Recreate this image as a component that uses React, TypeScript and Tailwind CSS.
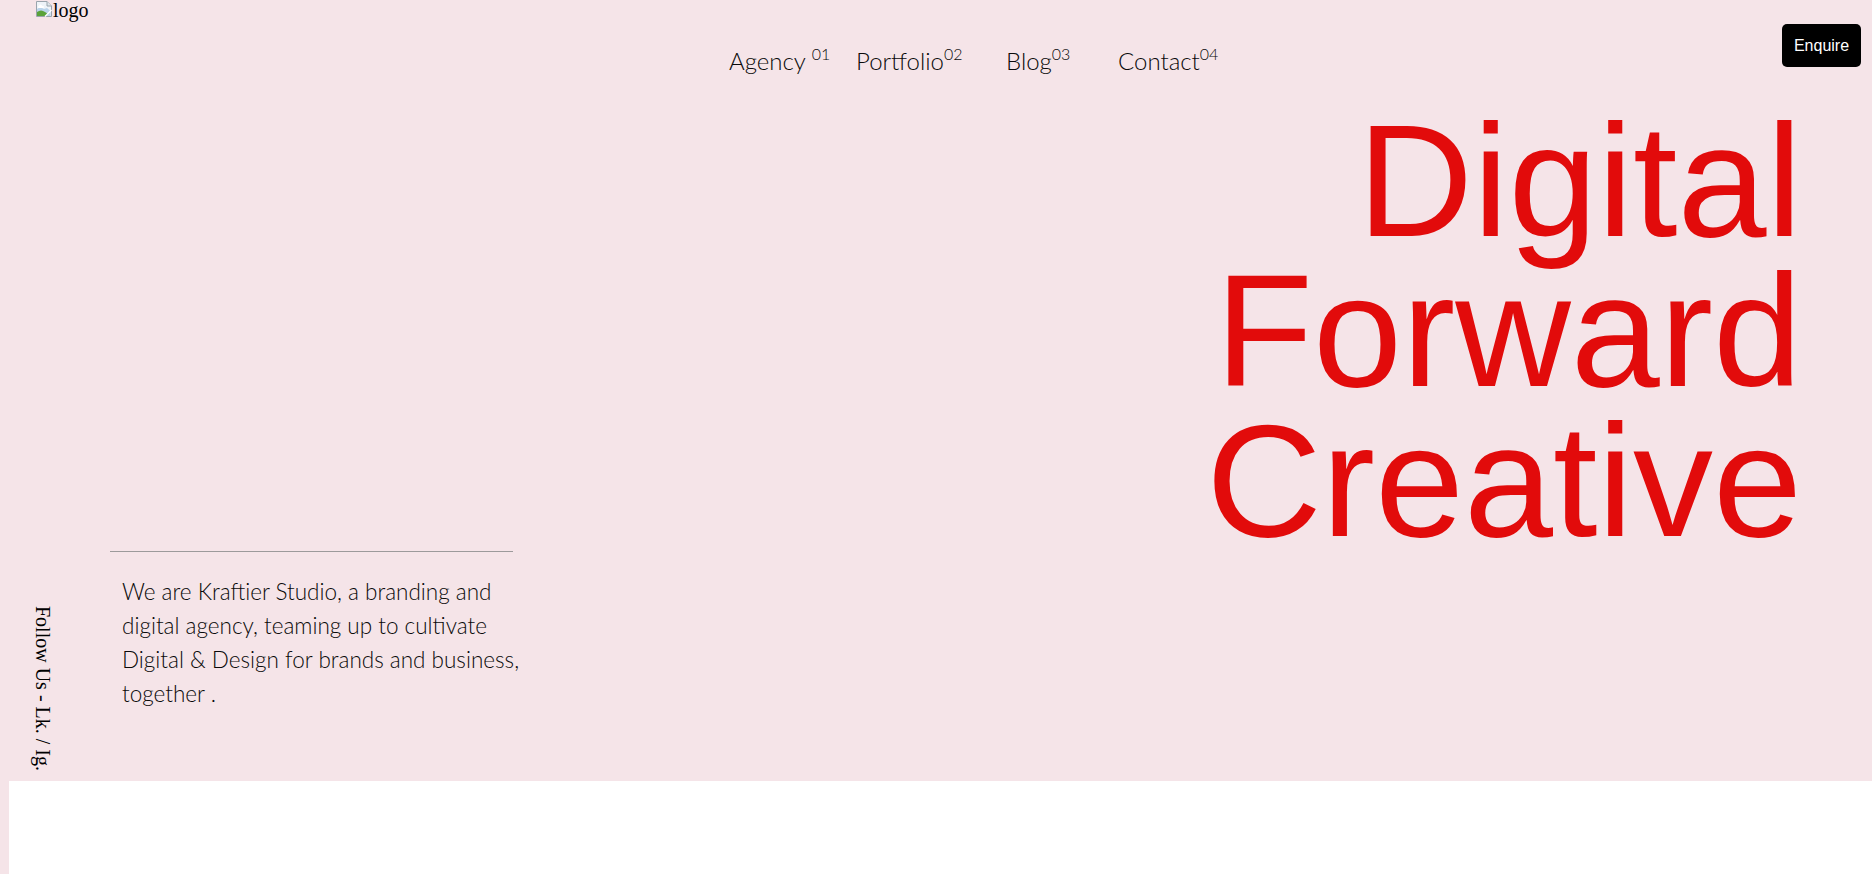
import React from "react";

function BrokenImg() {
  return (
    <svg width="18" height="18" viewBox="0 0 18 18" className="shrink-0">
      <path d="M1.5 1.5 H12 L16.5 6 V16.5 H1.5 Z" fill="#eef3f8" stroke="#9aa4ad" strokeWidth="1" />
      <path d="M12 1.5 V6 H16.5" fill="#dfe5ea" stroke="#9aa4ad" strokeWidth="1" />
      <path d="M2 9 Q5 6 9 9 L12 8 L15.5 11 V16 H2 Z" fill="#b9d3ea" />
      <path d="M2 16 V12 Q6 9 10 12 L13 14 L11 16 Z" fill="#5aa23a" />
      <path d="M4 6 a1.5 1.5 0 0 1 3 0 h1 a1 1 0 0 1 0 2 h-4 a1 1 0 0 1 0 -2" fill="#ffffff" />
      <path d="M10 16.5 L16.5 10" stroke="#ffffff" strokeWidth="1.5" />
    </svg>
  );
}

export default function App() {
  const nav = [
    { label: "Agency", sup: "01", space: true, w: "w-[127px]" },
    { label: "Portfolio", sup: "02", space: false, w: "w-[150px]" },
    { label: "Blog", sup: "03", space: false, w: "w-[112px]" },
    { label: "Contact", sup: "04", space: false, w: "" },
  ];
  return (
    <div className="min-h-screen bg-[#f5e4e8] overflow-hidden">
      <section className="h-[781px] flex flex-col">
        <header className="h-[106px] flex items-start">
          <div className="w-[729px] pl-[35px] flex items-start font-['Liberation_Serif',serif] text-[20px] leading-[20px] text-black">
            <BrokenImg />
            <span>logo</span>
          </div>
          <nav className="mt-[47px] flex items-start font-[Lato,sans-serif] font-light text-[24px] leading-[28px] text-[#0a0a0a]">
            {nav.map((n) => (
              <a key={n.label} className={`${n.w} block whitespace-nowrap`}>
                {n.label}
                {n.space ? " " : ""}
                <sup className="text-[16px] top-[-10px]">{n.sup}</sup>
              </a>
            ))}
          </nav>
          <button className="ml-auto mt-[24px] mr-[11px] h-[43px] w-[79px] bg-black text-white rounded-[5px] font-['Liberation_Sans',Arial,sans-serif] text-[16px]">
            Enquire
          </button>
        </header>
        <div className="flex justify-end pr-[70px] mb-[-5px]">
          <h1 className="text-right font-['Liberation_Sans',Arial,sans-serif] text-[160px] leading-[150px] text-[#e20b0b] font-normal">
            Digital
            <br />
            Forward
            <br />
            Creative
          </h1>
        </div>
        <div className="flex">
          <div className="w-[110px] pl-[28px] pt-[55px]">
            <span className="block [writing-mode:vertical-rl] font-['Liberation_Serif',serif] text-[20px] text-black whitespace-nowrap">
              Follow Us - Lk. / Ig.
            </span>
          </div>
          <div className="w-[403px]">
            <div className="border-t border-[#9c9a9b]" />
            <p className="mt-[23px] pl-[12px] font-[Lato,sans-serif] font-light text-[22.5px] leading-[34px] text-[#0a0a0a] whitespace-nowrap">
              We are Kraftier Studio, a branding and
              <br />
              digital agency, teaming up to cultivate
              <br />
              Digital &amp; Design for brands and business,
              <br />
              together .
            </p>
          </div>
        </div>
      </section>
      <div className="ml-[9px] bg-white h-[400px]" />
    </div>
  );
}
